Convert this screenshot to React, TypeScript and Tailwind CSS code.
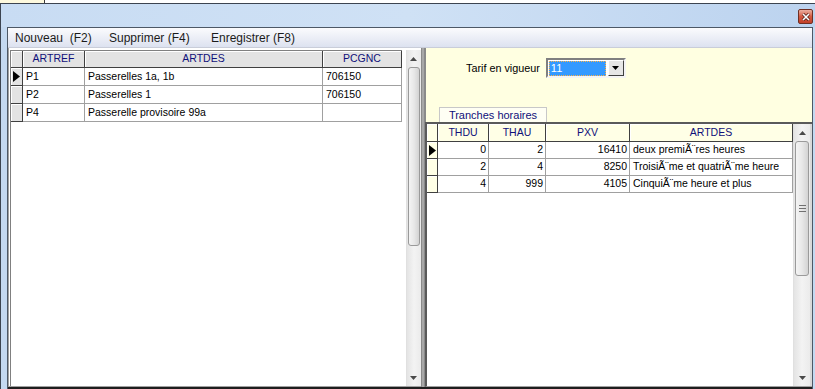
import React from "react";

const leftRows = [
  { ref: "P1", des: "Passerelles 1a, 1b", pcg: "706150", cur: true },
  { ref: "P2", des: "Passerelles 1", pcg: "706150", cur: false },
  { ref: "P4", des: "Passerelle provisoire 99a", pcg: "", cur: false },
];

const rightRows = [
  { du: "0", au: "2", pxv: "16410", des: "deux premiÃ¨res heures", cur: true },
  { du: "2", au: "4", pxv: "8250", des: "TroisiÃ¨me et quatriÃ¨me heure", cur: false },
  { du: "4", au: "999", pxv: "4105", des: "CinquiÃ¨me heure et plus", cur: false },
];

const Arrow = ({ up }: { up?: boolean }) => (
  <svg width="7" height="4" viewBox="0 0 7 4">
    {up ? <path d="M0 4 L3.5 0 L7 4Z" fill="#4a4a4a" /> : <path d="M0 0 L3.5 4 L7 0Z" fill="#4a4a4a" />}
  </svg>
);

const RowMark = () => (
  <svg width="7" height="11" viewBox="0 0 7 11">
    <path d="M0 0 L7 5.5 L0 11Z" fill="#000" />
  </svg>
);

const VScroll = ({ thumbTop, thumbH, grip, w }: { thumbTop: number; thumbH: number; grip?: boolean; w: string }) => (
  <div className={`${w} self-stretch flex flex-col bg-gradient-to-r from-[#e4e4e4] via-[#f3f3f3] to-[#ebebeb] border-l border-[#e0e0e0]`}>
    <div className="h-[17px] flex items-center justify-center">
      <Arrow up />
    </div>
    <div style={{ height: thumbTop }} />
    <div
      style={{ height: thumbH }}
      className="mx-[1px] rounded-[3px] border border-[#9a9a9a] bg-gradient-to-r from-[#f4f4f4] via-[#e8e8e8] to-[#d3d3d3] flex flex-col items-center justify-center gap-[2px]"
    >
      {grip && (
        <>
          <div className="w-[7px] h-[1px] bg-[#707070]" />
          <div className="w-[7px] h-[1px] bg-[#707070]" />
          <div className="w-[7px] h-[1px] bg-[#707070]" />
        </>
      )}
    </div>
    <div className="flex-1" />
    <div className="h-[17px] flex items-center justify-center">
      <Arrow />
    </div>
  </div>
);

const hdr = "border-r border-b border-[#404040] shadow-[inset_1px_1px_0_#ffffff] flex items-center justify-center text-[#10107a]";
const cell = "border-r border-b border-[#a0a0a0] flex items-center";

const App = () => {
  return (
    <div className="w-[815px] h-[389px] overflow-hidden bg-white flex flex-col font-['Liberation_Sans',Arial,sans-serif] text-[10.5px] text-black">
      {/* strip above the window */}
      <div className="h-[3px] flex">
        <div className="w-[45px] bg-[#fdf9de] border-r border-[#3a3a3a]" />
        <div className="flex-1 bg-white" />
      </div>

      {/* window */}
      <div className="flex-1 flex flex-col border-t border-l border-[#3c4450] bg-[#c4d9f1]">
        <div className="h-[23px] flex justify-end items-start pt-[5px] pr-[2px] bg-gradient-to-r from-[#c8dcf3] via-[#cfe1f5] to-[#bcd3ef]">
          <div className="w-[15px] h-[15px] rounded-[2px] border border-[#6e2f24] bg-gradient-to-b from-[#eab0a2] via-[#d45a41] to-[#c23f28] flex items-center justify-center">
            <svg width="8" height="8" viewBox="0 0 8 8">
              <path d="M1 1 L7 7 M7 1 L1 7" stroke="#4a1a12" strokeWidth="3" />
              <path d="M1 1 L7 7 M7 1 L1 7" stroke="#ffffff" strokeWidth="1.6" />
            </svg>
          </div>
        </div>

        <div className="flex-1 ml-[6px] mr-[2px] flex flex-col border-t border-l border-r border-[#4d5866] bg-white">
          {/* menu */}
          <div className="h-[20px] flex items-center pl-[7px] border-b border-[#c9cdd9] bg-gradient-to-b from-[#fbfbfd] to-[#dde2f0] text-[12px] text-[#1b1b1b] whitespace-pre">
            <span className="w-[94px]">Nouveau  (F2)</span>
            <span className="w-[102px]">Supprimer (F4)</span>
            <span>Enregistrer (F8)</span>
          </div>

          {/* panels */}
          <div className="flex-1 flex">
            {/* left */}
            <div className="w-[413px] flex pt-[2px] pl-[1px] border-l border-[#9a9a9a] border-b border-[#a0a0a0]">
              <div className="w-[392px] flex flex-col border-l border-t border-[#808080]">
                <div className="h-[17px] flex bg-[#e3e3e3]">
                  <div className={`w-[12px] ${hdr}`} />
                  <div className={`w-[62px] ${hdr}`}>ARTREF</div>
                  <div className={`w-[238px] ${hdr}`}>ARTDES</div>
                  <div className={`w-[79px] ${hdr}`}>PCGNC</div>
                </div>
                {leftRows.map((r) => (
                  <div key={r.ref} className="h-[18px] flex">
                    <div className={`w-[12px] bg-[#e3e3e3] ${hdr}`}>{r.cur && <RowMark />}</div>
                    <div className={`w-[62px] pl-[3px] ${cell}`}>{r.ref}</div>
                    <div className={`w-[238px] pl-[3px] ${cell}`}>{r.des}</div>
                    <div className={`w-[79px] pl-[3px] ${cell}`}>{r.pcg}</div>
                  </div>
                ))}
              </div>
              <div className="w-[4px]" />
              <VScroll w="w-[16px]" thumbTop={0} thumbH={179} />
            </div>

            {/* splitter */}
            <div className="w-[4px] bg-[#a8a8a8] border-l border-r border-[#8a8a8a]" />

            {/* right */}
            <div className="flex-1 flex flex-col bg-[#ffffe1]">
              <div className="h-[74px] flex flex-col border-l border-[#8a8a8a]">
                <div className="flex items-center pt-[10px] pl-[40px] gap-[6px]">
                  <span className="text-[10.8px]">Tarif en vigueur</span>
                  <div className="w-[80px] h-[20px] flex items-center border-2 border-t-[#808080] border-l-[#808080] border-r-[#f4f4f4] border-b-[#f4f4f4] bg-white pl-[1px]">
                    <div className="w-[58px] h-[15px] bg-[#3399ff] border border-dotted border-[#ffb347] text-white text-[11px] pl-[1px] flex items-center">
                      11
                    </div>
                    <div className="ml-[2px] w-[16px] h-[16px] bg-[#e6e6e6] border border-t-white border-l-white border-r-[#404040] border-b-[#404040] flex items-center justify-center">
                      <svg width="7" height="4" viewBox="0 0 7 4">
                        <path d="M0 0 L3.5 4 L7 0Z" fill="#000" />
                      </svg>
                    </div>
                  </div>
                </div>
                <div className="mt-auto ml-[13px] w-[108px] h-[15px] bg-[#fffff4] border-t border-l border-r border-[#c8c8c8] text-[#10107a] text-[11px] flex items-center justify-center">
                  Tranches horaires
                </div>
              </div>

              <div className="flex-1 flex bg-white border-l-2 border-t-2 border-[#5a5a5a] border-b border-b-[#a0a0a0]">
                <div className="w-[366px] flex flex-col">
                  <div className="h-[18px] flex bg-[#ffffe6]">
                    <div className={`w-[11px] ${hdr}`} />
                    <div className={`w-[51px] ${hdr}`}>THDU</div>
                    <div className={`w-[57px] ${hdr}`}>THAU</div>
                    <div className={`w-[84px] ${hdr}`}>PXV</div>
                    <div className={`w-[163px] ${hdr}`}>ARTDES</div>
                  </div>
                  {rightRows.map((r) => (
                    <div key={r.du} className="h-[17px] flex">
                      <div className={`w-[11px] bg-[#ffffe6] ${hdr}`}>{r.cur && <RowMark />}</div>
                      <div className={`w-[51px] justify-end pr-[2px] ${cell}`}>{r.du}</div>
                      <div className={`w-[57px] justify-end pr-[2px] ${cell}`}>{r.au}</div>
                      <div className={`w-[84px] justify-end pr-[2px] ${cell}`}>{r.pxv}</div>
                      <div className={`w-[163px] pl-[3px] whitespace-nowrap overflow-hidden ${cell}`}>{r.des}</div>
                    </div>
                  ))}
                </div>
                <VScroll w="w-[17px]" thumbTop={0} thumbH={135} grip />
                <div className="flex-1 bg-[#d9d9d9]" />
              </div>
            </div>
          </div>
          <div className="h-[2px] bg-[#1e1e1e]" />
        </div>
      </div>
    </div>
  );
};

export default App;
